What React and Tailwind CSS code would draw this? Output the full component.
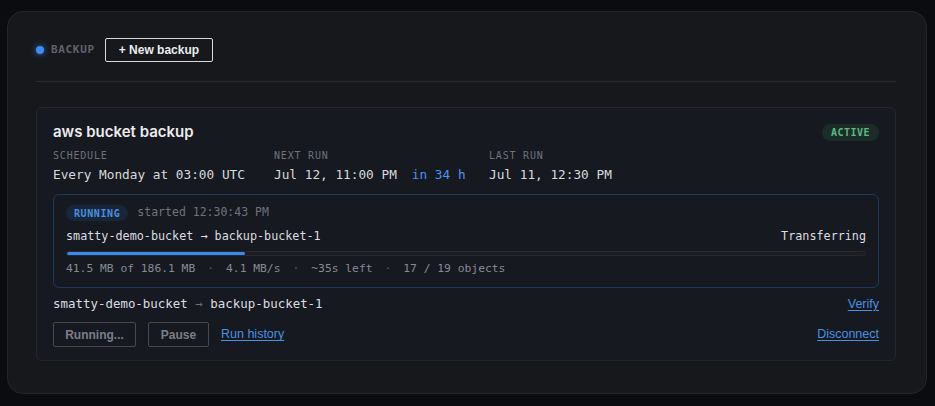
const mono = "font-['DejaVu_Sans_Mono','Liberation_Mono',monospace]";
const sans = "font-['Liberation_Sans',Arial,sans-serif]";

const Field = ({ label, children }) => (
  <div className="flex flex-col">
    <span className={`${mono} text-[10px] leading-[14px] tracking-[0.08em] text-[#6f727c]`}>
      {label}
    </span>
    <span className={`${mono} mt-[3px] text-[12.75px] leading-[18px] text-[#d8d9dc]`}>
      {children}
    </span>
  </div>
);

const Dot = () => <span className="text-[#5b5e67]">·</span>;

export default function App() {
  const done = 41.5;
  const total = 186.1;

  return (
    <div className="min-h-screen bg-[#0b0c0f] pl-[7px] pr-[8px] pt-[11px] pb-[12px]">
      <div className="rounded-[16px] border border-[#25262c] bg-[#17181c] pl-[28px] pr-[30px] pt-[26px] pb-[32px]">
        {/* header */}
        <div className="flex h-[24px] items-center">
          <span className="h-[8px] w-[8px] rounded-full bg-[#3b8cf5] shadow-[0_0_6px_rgba(59,140,245,0.7)]" />
          <span className={`${mono} ml-[7px] text-[11px] font-bold tracking-[0.06em] text-[#5f626c]`}>
            BACKUP
          </span>
          <button className={`${sans} ml-[10px] h-[24px] rounded-[2px] border border-[#d9d9dc] px-[13px] text-[12px] font-bold text-[#ececee]`}>
            + New backup
          </button>
        </div>

        <div className="mt-[19px] h-px bg-[#292a31]" />

        {/* backup job card */}
        <div className="mt-[25px] rounded-[6px] border border-[#25272f] bg-[#161920] px-[16px] pt-[14px] pb-[13px]">
          <div className="flex h-[20px] items-center justify-between">
            <h2 className="font-['Inter',sans-serif] text-[15px] font-semibold text-[#ececee]">
              aws bucket backup
            </h2>
            <span className={`${mono} flex h-[17px] items-center rounded-full bg-[#1c2d28] px-[9px] text-[10px] font-bold tracking-[0.05em] text-[#5fb889]`}>
              ACTIVE
            </span>
          </div>

          <div className="mt-[7px] flex">
            <div className="w-[221px]">
              <Field label="SCHEDULE">Every Monday at 03:00 UTC</Field>
            </div>
            <div className="w-[215px]">
              <Field label="NEXT RUN">
                Jul 12, 11:00 PM<span className="ml-[15px] text-[#4b93f0]">in 34 h</span>
              </Field>
            </div>
            <div>
              <Field label="LAST RUN">Jul 11, 12:30 PM</Field>
            </div>
          </div>

          {/* running transfer */}
          <div className="mt-[10px] rounded-[6px] border border-[#1e3a5e] px-[12px] pt-[10px] pb-[10px]">
            <div className="flex h-[16px] items-center">
              <span className={`${mono} flex h-[16px] items-center rounded-full bg-[#172639] px-[8px] text-[10px] font-bold tracking-[0.06em] text-[#4a8fe0]`}>
                RUNNING
              </span>
              <span className={`${mono} ml-[9px] text-[11.5px] text-[#6f727b]`}>
                started 12:30:43 PM
              </span>
            </div>
            <div className={`${mono} mt-[7px] flex h-[18px] items-center justify-between text-[11.75px] text-[#dcdde0]`}>
              <span>smatty-demo-bucket → backup-bucket-1</span>
              <span>Transferring</span>
            </div>
            <div className="mt-[5px] h-[5px] overflow-hidden rounded-full border border-[#272931] bg-[#1b1d23]">
              <div
                className="h-full rounded-full bg-[#3b8af0]"
                style={{ width: `${(done / total) * 100}%` }}
              />
            </div>
            <div className={`${mono} mt-[5px] flex h-[16px] items-center gap-[12px] text-[11.3px] text-[#878a94]`}>
              <span>41.5 MB of 186.1 MB</span>
              <Dot />
              <span>4.1 MB/s</span>
              <Dot />
              <span>~35s left</span>
              <Dot />
              <span>17 / 19 objects</span>
            </div>
          </div>

          <div className="mt-[7px] flex h-[18px] items-center justify-between">
            <span className={`${mono} text-[12.45px] text-[#dcdde0]`}>
              smatty-demo-bucket <span className="text-[#6b6e78]">→</span> backup-bucket-1
            </span>
            <a href="#" className={`${sans} text-[12.5px] text-[#4a90e2] underline underline-offset-2`}>
              Verify
            </a>
          </div>

          <div className="mt-[9px] flex h-[25px] items-center">
            <button className={`${sans} h-[25px] w-[83px] rounded-[2px] border border-[#484a52] text-[12px] font-bold text-[#7b7e87]`}>
              Running...
            </button>
            <button className={`${sans} ml-[12px] h-[25px] w-[61px] rounded-[2px] border border-[#484a52] text-[12px] font-bold text-[#7b7e87]`}>
              Pause
            </button>
            <a href="#" className={`${sans} ml-[12px] text-[12.5px] text-[#4a90e2] underline underline-offset-2`}>
              Run history
            </a>
            <a href="#" className={`${sans} ml-auto text-[12.5px] text-[#4a90e2] underline underline-offset-2`}>
              Disconnect
            </a>
          </div>
        </div>
      </div>
    </div>
  );
}
